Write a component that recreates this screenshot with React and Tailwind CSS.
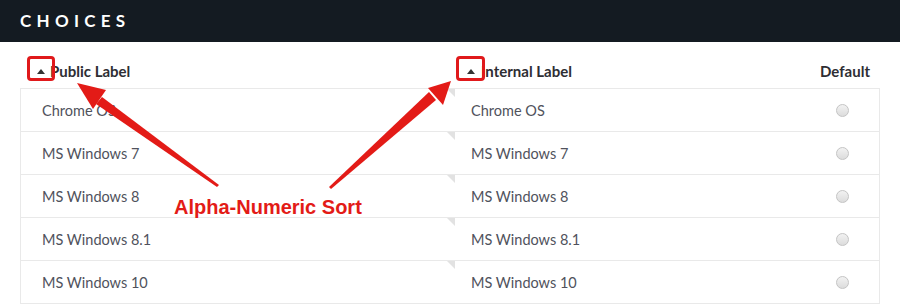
import React from 'react';

const rows = ['Chrome OS', 'MS Windows 7', 'MS Windows 8', 'MS Windows 8.1', 'MS Windows 10'];

function Caret() {
  return <span className="inline-block w-0 h-0 border-l-[4px] border-r-[4px] border-b-[5px] border-l-transparent border-r-transparent border-b-[#333]" />;
}

function Row({ label }) {
  return (
    <div className="flex h-[43px] border-t border-[#e9e9e9] items-center">
      <div className="relative w-[434px] h-full flex items-center pl-[21px] pt-[1px]">
        {label}
        <span className="absolute top-0 right-0 w-0 h-0 border-t-[8px] border-l-[8px] border-t-[#e2e2e2] border-l-transparent" />
      </div>
      <div className="flex-1 h-full flex items-center pl-[16px] pt-[1px]">{label}</div>
      <div className="w-[89px] h-full flex items-center justify-end pr-[30px]">
        <span className="block w-[13px] h-[13px] rounded-full border border-[#c4c4c4] bg-gradient-to-b from-[#f2f2f2] to-[#dcdcdc]" />
      </div>
    </div>
  );
}

export default function App() {
  return (
    <div className="relative w-[900px] h-[304px] bg-white overflow-hidden" style={{ fontFamily: 'Lato, "Open Sans", sans-serif' }}>
      <div className="h-[42px] bg-[#141b22] flex items-center pl-5">
        <h1 className="text-white text-[17px] font-bold tracking-[0.31em]">CHOICES</h1>
      </div>

      <div className="px-5 pt-[13px]">
        {/* column headings */}
        <div className="flex h-[33px] items-center text-[15px] font-bold text-[#2e2e33]">
          <div className="w-[434px] flex items-center gap-[5px] pl-[17px]">
            <Caret />
            <span>Public Label</span>
          </div>
          <div className="flex-1 flex items-center gap-[6px] pl-[13px]">
            <Caret />
            <span>Internal Label</span>
          </div>
          <div className="w-[89px] text-right pr-[10px]">Default</div>
        </div>

        <div className="border-l border-r border-b border-[#e9e9e9] text-[14.5px] text-[#50525c]">
          {rows.map((r) => (
            <Row key={r} label={r} />
          ))}
        </div>
      </div>

      {/* annotation overlay */}
      <span className="absolute left-[27px] top-[56px] w-[28px] h-[25px] rounded-[4px] border-[3px] border-[#e0191b]" />
      <span className="absolute left-[456px] top-[56px] w-[29px] h-[25px] rounded-[4px] border-[3px] border-[#e0191b]" />

      <svg className="absolute inset-0 pointer-events-none" width="900" height="304">
        <polygon points="217,187 219,185 102,97 96,104" fill="#e31b17" />
        <polygon points="77,83 106,90 93,109" fill="#e31b17" />
        <polygon points="329,187 331,189 436,100 429,92" fill="#e31b17" />
        <polygon points="451,81 443,105 428,88" fill="#e31b17" />
      </svg>

      <div
        className="absolute left-[174px] top-[197px] text-[20px] font-bold text-[#e31b17] leading-none"
        style={{ fontFamily: '"Liberation Sans", Arial, sans-serif' }}
      >
        Alpha-Numeric Sort
      </div>
    </div>
  );
}
